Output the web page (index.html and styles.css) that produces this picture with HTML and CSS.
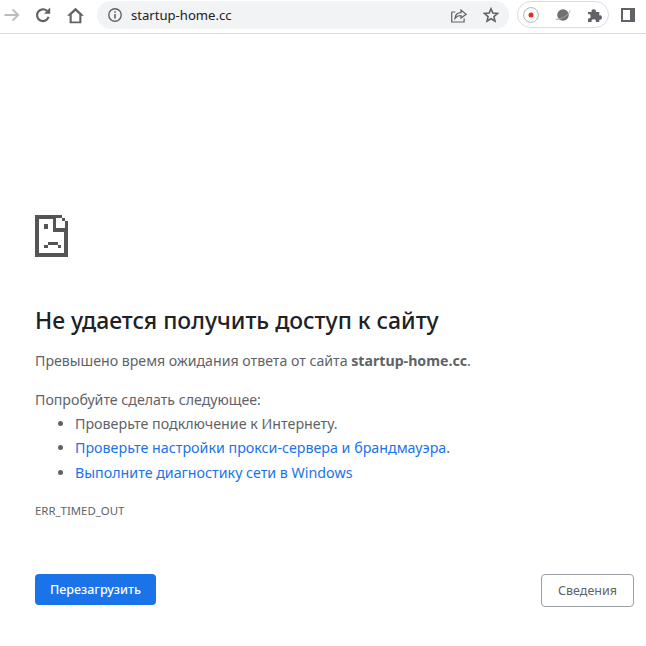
FILE: index.html
```html
<!DOCTYPE html>
<html lang="ru">
<head>
<meta charset="utf-8">
<title>startup-home.cc</title>
<link rel="stylesheet" href="styles.css">
</head>
<body>
<header class="toolbar">
  <svg class="tb-icon back" viewBox="0 0 16 16"><path d="M.5 8h13.500M8.500 2.300 14.200 8l-5.700 5.700" fill="none" stroke="#b9bbbe" stroke-width="1.900"/></svg>
  <svg class="tb-icon reload" viewBox="0 0 16 16"><path d="M13.600 9.800A5.900 5.900 0 1 1 12 3.900" fill="none" stroke="#5f6368" stroke-width="2.200"/><path d="M9 6.800h6.200V.6z" fill="#5f6368"/></svg>
  <svg class="tb-icon home" viewBox="0 0 17 17"><path d="M8.500 .8 0 8.800h2.600v7.400h11.800V8.800H17zM4.700 14.400V7.400L8.500 3.900l3.800 3.500v7z" fill="#5f6368"/></svg>
  <div class="omnibox">
    <svg class="info" viewBox="0 0 14 14"><circle cx="7" cy="7" r="6.200" fill="none" stroke="#5f6368" stroke-width="1.400"/><path d="M6.200 6h1.600v4.500H6.200zM6.200 3.200h1.600v1.600H6.200z" fill="#5f6368"/></svg>
    <span class="url">startup-home.cc</span>
    <svg class="share" viewBox="0 0 16 16"><path d="M.7 5v10h12.400v-3.400M.7 5h3.600" fill="none" stroke="#5f6368" stroke-width="1.200"/><path d="M4 11.400C4.400 7.600 7 5.600 10 5.600V3l5.200 4.300L10 11V8.500c-2.500 0-4.500.8-6 2.900z" fill="none" stroke="#5f6368" stroke-width="1.200"/></svg>
    <svg class="star" viewBox="0 0 16 16"><path d="m8 1.800 1.800 4.300 4.700.4-3.600 3.100 1.100 4.600L8 11.800l-4 2.400 1.100-4.600-3.600-3.100 4.700-.4z" fill="none" stroke="#5f6368" stroke-width="1.600"/></svg>
  </div>
  <div class="extensions">
    <svg class="rec" viewBox="0 0 16 16"><circle cx="8" cy="8" r="7.400" fill="#fff" stroke="#9aa0a6" stroke-width=".8"/><circle cx="8" cy="8" r="2.500" fill="#ea2a1c"/></svg>
    <svg class="planet" viewBox="0 0 16 16"><circle cx="8" cy="8" r="5.800" fill="#6f7275"/><path d="M1 12.400C3 13 8 11 11 8.800s4.600-4.600 4-5.400" fill="none" stroke="#a4a6a9" stroke-width="1"/></svg>
    <svg class="puzzle" viewBox="0 0 16 16"><path d="M1 5h3.600a2.200 2.200 0 1 1 4.300 0h3.400v3.400a2.200 2.200 0 1 1 0 4.300V15H8.900a2.200 2.200 0 1 0-4.300 0H1v-3.500a2.200 2.200 0 1 0 0-4.300z" fill="#5f6368"/></svg>
  </div>
  <svg class="panel" viewBox="0 0 14 14"><path d="M0 0h14v14H0zM2 2v10h7V2z" fill="#5f6368" fill-rule="evenodd"/></svg>
</header>

<main class="page">
  <svg class="sad-doc" viewBox="0 0 33 42" shape-rendering="crispEdges">
    <path fill="#555" fill-rule="evenodd" d="M0 0h26.500v3H21v10h12v29H0zM4 3.500V38h25V17H18V3.500z"/>
    <path fill="#555" d="M26.500 3h3v3h-3zM29.500 6H33v7h-3.500zM9 9h4v5H9zM13 27h10v3H13zM9 30h4v3H9zM23 30h3v3h-3z"/>
  </svg>
  <h1 class="title">Не удается получить доступ к сайту</h1>
  <p class="summary">Превышено время ожидания ответа от сайта <strong>startup-home.cc</strong>.</p>
  <p class="try">Попробуйте сделать следующее:</p>
  <ul class="tips">
    <li>Проверьте подключение к Интернету.</li>
    <li><a href="#">Проверьте настройки прокси-сервера и брандмауэра</a>.</li>
    <li><a href="#">Выполните диагностику сети в Windows</a></li>
  </ul>
  <div class="code">ERR_TIMED_OUT</div>
  <div class="actions">
    <button class="btn primary">Перезагрузить</button>
    <button class="btn secondary">Сведения</button>
  </div>
</main>
</body>
</html>
```
FILE: styles.css
```css
* { box-sizing: border-box; }
html, body { margin: 0; padding: 0; background: #fff; }
body { font-family: "Noto Sans", "Open Sans", sans-serif; color: #5f6368; overflow: hidden; }

.toolbar { display: flex; align-items: flex-start; height: 34px; border-bottom: 1px solid #dadce0; padding-top: 1px; }
.tb-icon, .panel { flex: none; display: block; }
.back { width: 16px; height: 16px; margin: 6px 0 0 4px; }
.reload { width: 16px; height: 16px; margin: 6px 0 0 15px; }
.home { width: 17px; height: 17px; margin: 6px 0 0 16px; }

.omnibox { display: flex; align-items: center; width: 412px; height: 28px; margin-left: 13px; border-radius: 14px; background: #f1f3f4; padding: 0 10px 0 11px; }
.info { width: 14px; height: 14px; flex: none; }
.url { margin-left: 9px; font-size: 13.100px; color: #202124; flex: 1; }
.share { width: 16px; height: 16px; flex: none; }
.star { width: 16px; height: 16px; flex: none; margin-left: 16px; }

.extensions { display: flex; align-items: center; width: 92px; height: 27px; margin-left: 8px; border: 1px solid #dadce0; border-radius: 14px; padding-left: 5px; }
.rec { width: 16px; height: 16px; flex: none; }
.planet { width: 16px; height: 16px; flex: none; margin-left: 16px; }
.puzzle { width: 16px; height: 16px; flex: none; margin-left: 16px; }
.panel { width: 14px; height: 14px; margin: 7px 0 0 12px; }

.page { padding: 181px 12px 0 35px; }
.sad-doc { display: block; width: 33px; height: 42px; }
.title { margin: 47px 0 0; font-size: 22.950px; line-height: 32px; font-weight: 500; color: #202124; }
.summary { margin: 13px 0 0; font-size: 14.170px; line-height: 24px; }
.summary strong { font-weight: 700; }
.try { margin: 15px 0 0; font-size: 14.170px; line-height: 24px; }
.tips { margin: 0; padding: 0 0 0 40px; font-size: 14.250px; line-height: 24.300px; }
.tips a { color: #1a73e8; text-decoration: none; }
.code { margin-top: 18px; font-size: 11.400px; line-height: 16px; text-transform: uppercase; }
.actions { display: flex; justify-content: space-between; align-items: flex-start; margin-top: 55px; }
.btn { font: inherit; border-radius: 4px; height: 31px; font-size: 12.500px; padding: 0; }
.primary { width: 121px; background: #1a73e8; border: 0; color: #fff; font-weight: 500; }
.secondary { width: 93px; height: 33px; background: #fff; border: 1px solid #9aa0a6; color: #5f6368; }
```
